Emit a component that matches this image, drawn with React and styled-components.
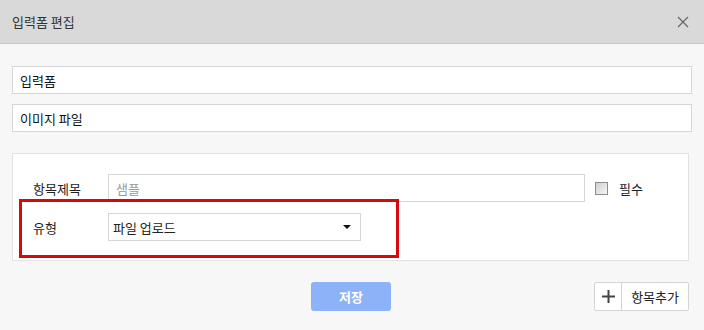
import React from 'react';
import styled, {createGlobalStyle} from 'styled-components';

const GlobalStyle = createGlobalStyle`
    html, body {
        margin: 0;
        padding: 0;
        background: #f7f7f7;
    }
    body {
        font-family: "Noto Sans CJK KR", "Noto Sans", sans-serif;
        font-size: 13px;
        color: #222;
    }
`;

const StyledDialog = styled.div`
    width: 704px;
    height: 330px;
    background: #f7f7f7;
    overflow: hidden;
`;

const StyledHeader = styled.div`
    height: 43px;
    background: #d9d9d9;
    border-bottom: 1px solid #c9c9c9;
    display: flex;
    align-items: center;
    justify-content: space-between;
    padding: 0 15px 0 12px;
    font-size: 13px;
    color: #333;
`;

const StyledClose = styled.button`
    border: none;
    background: none;
    padding: 0;
    width: 12px;
    height: 12px;
    display: flex;
    cursor: pointer;
`;

const StyledBody = styled.div`
    padding: 22px 12px 0 12px;
    display: flex;
    flex-direction: column;
`;

const StyledTextInput = styled.input`
    box-sizing: border-box;
    width: ${props => props.width || '100%'};
    height: 28px;
    border: 1px solid #d6d6d6;
    background: #fff;
    padding: 0 7px;
    font-family: inherit;
    font-size: 13px;
    color: #111;
    margin-bottom: ${props => props.gap || '0'};
    outline: none;
    &::placeholder {
        color: #999;
    }
`;

const StyledPanel = styled.div`
    margin-top: 21px;
    width: 677px;
    height: 108px;
    box-sizing: border-box;
    background: #fff;
    border: 1px solid #e2e2e2;
    padding: 20px 0 0 20px;
    display: flex;
    flex-direction: column;
    gap: 11px;
`;

const StyledRow = styled.div`
    display: flex;
    align-items: center;
`;

// red highlight around the type row
const StyledTypeRow = styled(StyledRow)`
    position: relative;
    margin-top: -14px;
    margin-left: -14px;
    padding: 11px 0 14px 11px;
    width: 380px;
    height: 59px;
    box-sizing: border-box;
    border: 3px solid #d7080e;
`;

const StyledLabel = styled.label`
    width: 75px;
    font-size: 13px;
    color: #222;
`;

const StyledCheckLabel = styled.label`
    display: flex;
    align-items: center;
    margin-left: 10px;
    gap: 11px;
    font-size: 13px;
`;

const StyledCheckbox = styled.span`
    width: 11px;
    height: 11px;
    border: 1px solid #8d8d8d;
    background: linear-gradient(135deg, #cfcfcf, #f6f6f6);
    display: inline-block;
`;

const StyledSelect = styled.div`
    box-sizing: border-box;
    width: 253px;
    height: 28px;
    border: 1px solid #d6d6d6;
    background: #fff;
    display: flex;
    align-items: center;
    justify-content: space-between;
    padding: 0 9px 0 4px;
    font-size: 13px;
`;

const StyledArrow = styled.span`
    width: 0;
    height: 0;
    border-left: 4px solid transparent;
    border-right: 4px solid transparent;
    border-top: 4px solid #111;
`;

const StyledFooter = styled.div`
    margin-top: 21px;
    display: flex;
    align-items: center;
    height: 29px;
`;

const StyledSaveButton = styled.button`
    margin-left: 299px;
    width: 80px;
    height: 29px;
    border: none;
    border-radius: 3px;
    background: #8cb3f7;
    color: #fff;
    font-family: inherit;
    font-weight: bold;
    font-size: 13px;
`;

const StyledAddButton = styled.button`
    margin-left: auto;
    margin-right: 3px;
    height: 29px;
    display: flex;
    align-items: stretch;
    padding: 0;
    border: 1px solid #d4d4d4;
    border-radius: 2px;
    background: #fff;
    font-family: inherit;
    font-size: 13px;
    color: #222;
`;

const StyledPlus = styled.span`
    width: 26px;
    border-right: 1px solid #d4d4d4;
    display: flex;
    align-items: center;
    justify-content: center;
`;

const StyledAddText = styled.span`
    display: flex;
    align-items: center;
    padding: 0 9px 0 9px;
`;

export default function App() {
    return (
        <StyledDialog>
            <GlobalStyle />
            <StyledHeader>
                <span>입력폼 편집</span>
                <StyledClose aria-label="close">
                    <svg width="12" height="12" viewBox="0 0 12 12">
                        <path d="M1 1 L11 11 M11 1 L1 11" stroke="#666" strokeWidth="1.2" />
                    </svg>
                </StyledClose>
            </StyledHeader>
            <StyledBody>
                <StyledTextInput defaultValue="입력폼" gap="10px" />
                <StyledTextInput defaultValue="이미지 파일" />
                <StyledPanel>
                    <StyledRow>
                        <StyledLabel>항목제목</StyledLabel>
                        <StyledTextInput placeholder="샘플" width="477px" />
                        <StyledCheckLabel>
                            <StyledCheckbox />
                            필수
                        </StyledCheckLabel>
                    </StyledRow>
                    <StyledTypeRow>
                        <StyledLabel>유형</StyledLabel>
                        <StyledSelect>
                            <span>파일 업로드</span>
                            <StyledArrow />
                        </StyledSelect>
                    </StyledTypeRow>
                </StyledPanel>
                <StyledFooter>
                    <StyledSaveButton>저장</StyledSaveButton>
                    <StyledAddButton>
                        <StyledPlus>
                            <svg width="13" height="13" viewBox="0 0 13 13">
                                <path d="M6.5 0 V13 M0 6.5 H13" stroke="#444" strokeWidth="2" />
                            </svg>
                        </StyledPlus>
                        <StyledAddText>항목추가</StyledAddText>
                    </StyledAddButton>
                </StyledFooter>
            </StyledBody>
        </StyledDialog>
    );
}
